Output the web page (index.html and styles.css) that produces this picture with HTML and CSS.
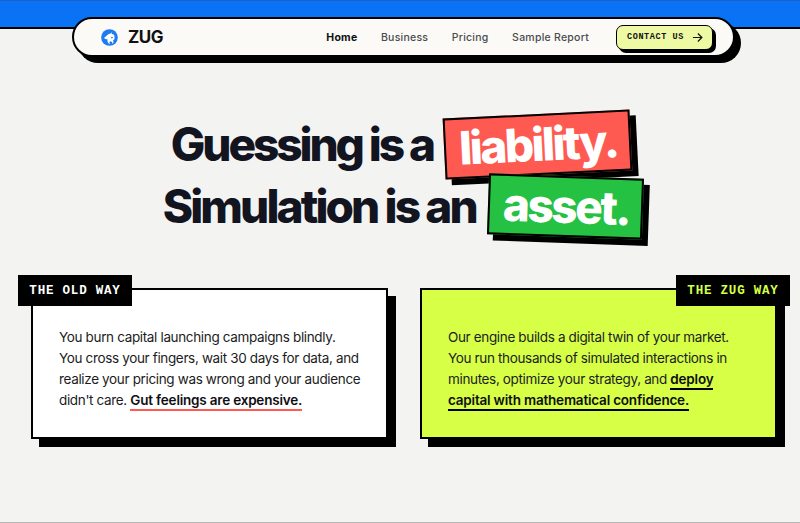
FILE: index.html
```html
<!DOCTYPE html>
<html lang="en">
<head>
<meta charset="utf-8">
<title>ZUG</title>
<link rel="stylesheet" href="styles.css">
</head>
<body>
<div class="band"></div>
<header class="nav">
  <a class="brand">
    <svg class="brand-icon" viewBox="0 0 18 18" width="17" height="17" aria-hidden="true">
      <circle cx="9" cy="9" r="8.8" fill="#1f7bf2"/>
      <path d="M11 3.4 L11.6 5.4 L13.8 6 L14.4 8.8 C14.6 10.6 13.8 11.6 12.6 12 C13.6 13.2 13.4 14.6 12.2 15.8 C12.2 14.2 11.2 13.2 9.6 13 C8.8 13.8 8.8 14.8 9.6 16.2 C7.4 15.4 6.4 13.2 7 11.2 L4 10.4 L3.4 9.2 L6.6 6.6 C7.6 5.4 9 5 10 5 Z" fill="#fff"/>
      <path d="M10.4 8.2 L13 8.6 L11.4 10.2 Z" fill="#1f7bf2"/>
    </svg>
    <span class="brand-name">ZUG</span>
  </a>
  <nav class="links">
    <a class="link active">Home</a>
    <a class="link">Business</a>
    <a class="link">Pricing</a>
    <a class="link">Sample Report</a>
  </nav>
  <a class="cta">CONTACT US
    <svg viewBox="0 0 12 12" width="11" height="11" aria-hidden="true"><path d="M1 6h9.6M6.4 1.6 10.8 6l-4.4 4.4" fill="none" stroke="#111" stroke-width="1.3"/></svg>
  </a>
</header>
<main>
  <h1 class="hero">
    <span class="hero-line line-one">Guessing is a <span class="badge red">liability.</span></span>
    <span class="hero-line line-two">Simulation is an <span class="badge green">asset.</span></span>
  </h1>
  <section class="cards">
    <article class="card old">
      <div class="tag tag-left">THE OLD WAY</div>
      <p>You burn capital launching campaigns blindly.<br>You cross your fingers, wait 30 days for data, and<br>realize your pricing was wrong and your audience<br>didn't care. <strong class="mark-red">Gut feelings are expensive.</strong></p>
    </article>
    <article class="card zug">
      <div class="tag tag-right">THE ZUG WAY</div>
      <p>Our engine builds a digital twin of your market.<br>You run thousands of simulated interactions in<br>minutes, optimize your strategy, and <strong class="mark-dark">deploy<br>capital with mathematical confidence.</strong></p>
    </article>
  </section>
</main>
</body>
</html>
```
FILE: styles.css
```css
* { box-sizing: border-box; }
html, body { margin: 0; padding: 0; }
body {
  width: 800px;
  height: 523px;
  overflow: hidden;
  background: #f3f3f1;
  border-bottom: 1px solid #b5b5b3;
  font-family: Inter, "Liberation Sans", sans-serif;
  color: #12141f;
}
.band {
  height: 29px;
  background: #0a72f5;
  border-top: 1px solid #1a62c8;
  border-bottom: 2px solid #000;
}
.nav {
  position: relative;
  margin: -12px 0 0 72px;
  width: 663px;
  height: 40px;
  display: flex;
  align-items: center;
  padding: 0 20px 0 27px;
  background: #fbfaf7;
  border: 2px solid #000;
  border-radius: 20px;
  box-shadow: 6px 6px 0 #000;
}
.brand { display: flex; align-items: center; gap: 10px; }
.brand-icon { display: block; }
.brand-name { font-size: 17px; font-weight: 700; letter-spacing: -0.5px; color: #111; }
.links { display: flex; gap: 23.5px; margin-left: auto; margin-right: 27px; }
.link { font-size: 10.5px; font-weight: 500; letter-spacing: 0.25px; color: #4b4b50; }
.link.active { color: #111; font-weight: 700; }
.cta {
  display: flex;
  align-items: center;
  gap: 8px;
  width: 97px;
  height: 25px;
  padding-left: 10px;
  background: #eef9a4;
  border: 1.5px solid #000;
  border-radius: 7px;
  box-shadow: 3px 3px 0 #000;
  font-family: "Liberation Mono", monospace;
  font-size: 8.5px;
  font-weight: 700;
  letter-spacing: 0.6px;
  color: #111;
}
.hero {
  margin: 56px 0 0;
  font-size: 46px;
  font-weight: 800;
  line-height: 62px;
  text-align: center;
  color: #12141f;
}
.hero-line { display: block; white-space: nowrap; }
.line-one { letter-spacing: -3.1px; transform: translateX(1px); }
.line-two { letter-spacing: -2.9px; transform: translateX(3px); }
.badge {
  display: inline-block;
  height: 61px;
  line-height: 57px;
  color: #fff;
  border: 2px solid #000;
  box-shadow: 6px 6px 0 #000;
  letter-spacing: -2.5px;
  vertical-align: baseline;
  position: relative;
}
.red { background: #ff5a52; padding: 0 12px 0 13px; transform: rotate(-2.8deg); margin-left: 4px; }
.green { background: #25c142; padding: 0 12px 0 13px; transform: rotate(2deg); margin-left: 5px; }
.cards {
  display: grid;
  grid-template-columns: 357px 357px;
  gap: 32px;
  margin: 0;
  padding: 51px 0 0 31px;
}
.card {
  position: relative;
  height: 151px;
  padding: 37px 16px 0 26px;
  border: 2px solid #000;
  box-shadow: 8px 8px 0 #000;
}
.card p {
  margin: 0;
  font-size: 13.5px;
  letter-spacing: -0.35px;
  line-height: 21px;
  color: #1c1c22;
}
.old { background: #fff; }
.zug { background: #d6ff45; }
.tag {
  position: absolute;
  top: -15px;
  width: 114px;
  height: 31px;
  padding-top: 1px;
  display: flex;
  align-items: center;
  justify-content: center;
  background: #000;
  font-family: "Liberation Mono", monospace;
  font-size: 12.5px;
  font-weight: 700;
  letter-spacing: 0.8px;
  white-space: pre;
}
.tag-left { left: -15px; color: #fff; }
.tag-right { right: -15px; color: #d6ff45; }
strong { font-weight: 600; letter-spacing: -0.2px; color: #0e0e12; padding-bottom: 1px; }
.mark-red { border-bottom: 2px solid #ff5a52; }
.mark-dark { border-bottom: 2px solid #000; }
```
